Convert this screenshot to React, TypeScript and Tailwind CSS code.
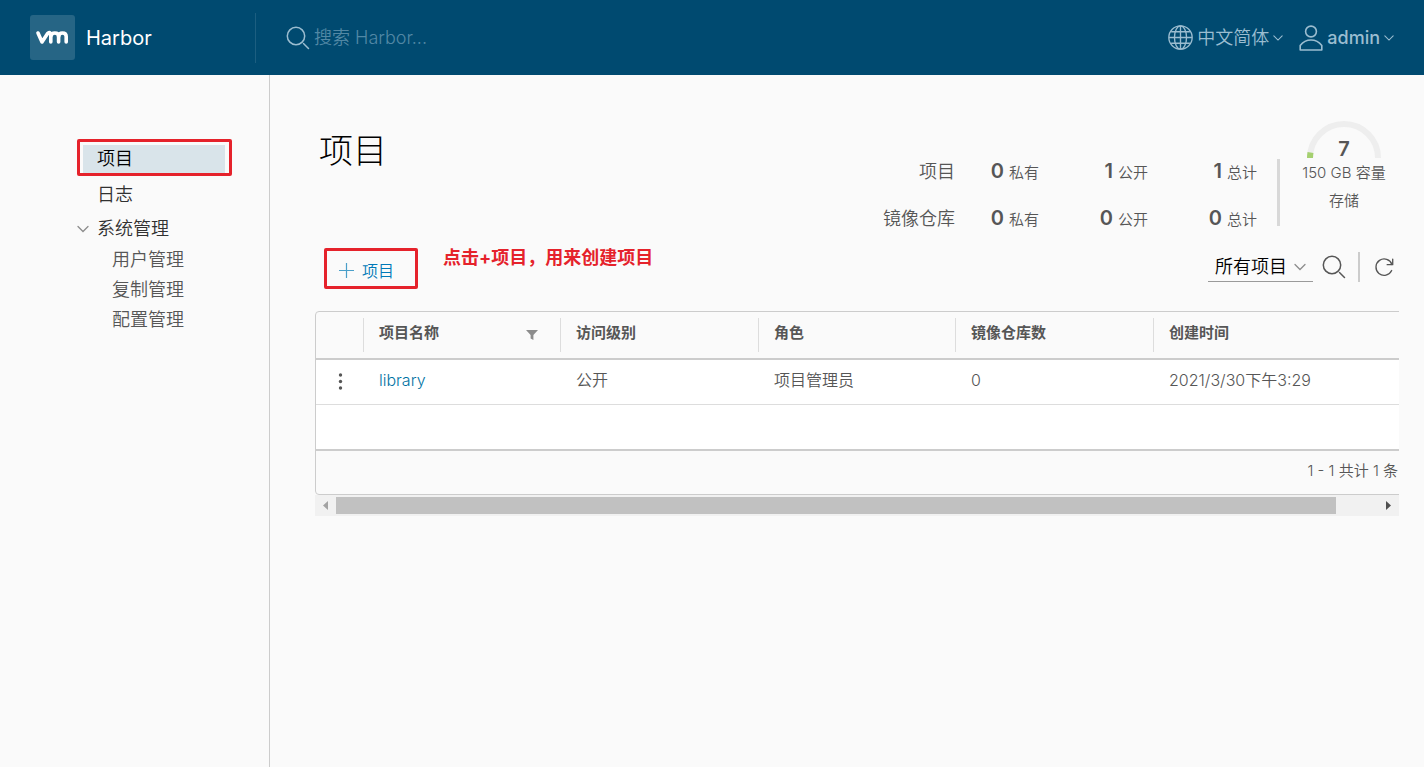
import React, { useState } from 'react';

const ChevronDown = ({ className }: { className?: string }) => (
  <svg viewBox="0 0 12 12" className={className} fill="none" stroke="currentColor" strokeWidth="1.3" strokeLinecap="round">
    <path d="M1 3.5 L6 8.5 L11 3.5" />
  </svg>
);

const SearchIcon = ({ className }: { className?: string }) => (
  <svg viewBox="0 0 24 24" className={className} fill="none" stroke="currentColor" strokeWidth="1.5" strokeLinecap="round">
    <circle cx="10" cy="10" r="8.7" />
    <path d="M17.5 17.5 L22.5 22.5" />
  </svg>
);

const GlobeIcon = ({ className }: { className?: string }) => (
  <svg viewBox="0 0 24 24" className={className} fill="none" stroke="currentColor" strokeWidth="1.3">
    <circle cx="12" cy="12" r="11.2" />
    <ellipse cx="12" cy="12" rx="5.8" ry="11.2" />
    <path d="M12 1 V23 M1 12 H23 M3 6.5 H21 M3 17.5 H21" />
  </svg>
);

const UserIcon = ({ className }: { className?: string }) => (
  <svg viewBox="0 0 24 26" className={className} fill="none" stroke="currentColor" strokeWidth="1.6" strokeLinejoin="round">
    <circle cx="12" cy="6.5" r="5.4" />
    <path d="M1.2 25 V20.5 C4 16.8 7.6 15 12 15 C16.4 15 20 16.8 22.8 20.5 V25 Z" />
  </svg>
);

const RefreshIcon = ({ className }: { className?: string }) => (
  <svg viewBox="0 0 22 22" className={className} fill="none" stroke="currentColor" strokeWidth="1.4" strokeLinecap="round" strokeLinejoin="round">
    <path d="M18.5 14.2 A8.6 8.6 0 1 1 18.8 7.8" />
    <path d="M19.6 2.2 V8 H13.8" />
  </svg>
);

const VmLogo = ({ className }: { className?: string }) => (
  <svg viewBox="0 0 45 45" className={className} fill="none" stroke="#fff" strokeWidth="3.6" strokeLinecap="round" strokeLinejoin="round">
    <rect width="45" height="45" rx="3" fill="#fff" fillOpacity="0.15" stroke="none" />
    <path d="M8 18 L12 27 L17.6 18.5 Q20.6 16.4 20.8 19.5 V27" />
    <path d="M20.8 21 Q21.5 18 24.8 18 Q28.6 18 28.6 21.5 V27" />
    <path d="M28.6 21.5 Q29 18 32.4 18 Q36.2 18 36.2 21.5 V27" />
  </svg>
);

const subLinks = ['用户管理', '复制管理', '配置管理'];

const stats = [
  { label: '项目', values: [0, 1, 1] },
  { label: '镜像仓库', values: [0, 0, 0] },
];
const statNames = ['私有', '公开', '总计'];

const columns = [
  { name: '项目名称', width: 'w-[197px]', filter: true },
  { name: '访问级别', width: 'w-[198px]' },
  { name: '角色', width: 'w-[197px]' },
  { name: '镜像仓库数', width: 'w-[198px]' },
  { name: '创建时间', width: '' },
];

const Header = () => {
  const [search, setSearch] = useState('');

  return (
    <header className="flex h-[75px] items-center bg-[#004a70] px-[30px] text-[#9bbdd0]">
      <a href="#" className="flex w-[225px] items-center gap-[11px] text-xl text-white">
        <VmLogo className="h-[45px] w-[45px]" />
        Harbor
      </a>
      <div className="flex h-[50px] flex-grow items-center gap-1 border-l border-[#1c5e80] pl-[30px]">
        <SearchIcon className="h-6 w-6" />
        <input
          type="text"
          aria-label="搜索"
          value={search}
          onChange={(e) => setSearch(e.target.value)}
          placeholder="搜索 Harbor..."
          className="w-[300px] bg-transparent text-lg font-[350] text-white outline-none placeholder:text-[#5288a5]"
        />
      </div>
      <div className="flex items-center gap-4 text-lg">
        <button className="flex items-center gap-1 font-[350]">
          <GlobeIcon className="h-[25px] w-[25px]" />
          中文简体
          <ChevronDown className="h-[10px] w-[10px]" />
        </button>
        <button className="flex items-center gap-1 font-medium">
          <UserIcon className="h-[26px] w-6" />
          admin
          <ChevronDown className="h-[10px] w-[10px]" />
        </button>
      </div>
    </header>
  );
};

const Sidebar = () => (
  <nav className="w-[270px] flex-shrink-0 border-r border-[#ccc] pt-16 pl-[77px] text-lg font-[350] text-[#313131]">
    <div className="h-[37px] w-[155px] rounded-xs border-3 border-[#e5222b] pt-[3px] pl-[3px]">
      <a href="#" className="flex h-7 w-[142px] items-center bg-[#d9e4ea] pl-[14px] text-black">项目</a>
    </div>
    <a href="#" className="flex h-[37px] items-center pl-5">日志</a>
    <button className="flex h-8 items-center gap-2">
      <ChevronDown className="h-3 w-3 text-[#8c8c8c]" />
      系统管理
    </button>
    {subLinks.map((link) => (
      <a key={link} href="#" className="flex h-[30px] items-center pl-[35px] text-[#565656]">{link}</a>
    ))}
  </nav>
);

const Statistics = () => (
  <div className="flex">
    <table className="mt-7 h-fit text-right text-[15px] font-[350]">
      <tbody>
        {stats.map((row) => (
          <tr key={row.label} className="h-[47px]">
            <th scope="row" className="text-lg font-[350]">{row.label}</th>
            {row.values.map((value, i) => (
              <td key={statNames[i]} className={i === 0 ? 'w-[84px]' : 'w-[109px]'}>
                <span className="mr-[5px] text-xl leading-6 font-semibold">{value}</span>
                {statNames[i]}
              </td>
            ))}
          </tr>
        ))}
      </tbody>
    </table>
    <div className="mt-[39px] ml-5 h-[67px] w-[3px] bg-[#d8d8d8]" />
    <div className="ml-5 flex w-[88px] flex-col items-center text-[15px] leading-7 font-[350]">
      <div className="relative h-[39px] w-[76px]">
        <svg viewBox="0 0 76 39" className="h-full w-full" fill="none" strokeWidth="6">
          <path d="M4 38 A34 34 0 0 1 72 38" stroke="#eee" />
          <path d="M4 38 A34 34 0 0 1 4.5 32.5" stroke="#a5d070" />
        </svg>
        <span className="absolute inset-x-0 bottom-0 text-center text-xl leading-5 font-semibold">7</span>
      </div>
      <span className="whitespace-nowrap">150 GB 容量</span>
      <span>存储</span>
    </div>
  </div>
);

const Toolbar = () => (
  <div className="mt-[6px] flex h-[51px] items-start justify-between">
    <div className="flex pl-[9px]">
      <button className="flex h-[41px] w-[94px] items-center gap-2 rounded-xs border-3 border-[#e5222b] pt-1 pl-3 text-base font-[350] text-[#0079b8]">
        <svg viewBox="0 0 15 15" className="h-[15px] w-[15px]" stroke="#4a9fc9" strokeWidth="1.2">
          <path d="M7.5 0 V15 M0 7.5 H15" />
        </svg>
        项目
      </button>
      <p className="ml-[25px] text-lg leading-5 font-bold text-[#e5222b]">点击+项目，用来创建项目</p>
    </div>
    <div className="mt-1 flex items-center pr-1">
      <div className="flex w-[105px] items-center border-b border-[#9a9a9a]">
        <select aria-label="项目筛选" className="w-[86px] appearance-none bg-transparent pl-[7px] text-lg leading-7 font-[350] text-black outline-none">
          <option>所有项目</option>
        </select>
        <ChevronDown className="h-3 w-3 text-[#8c8c8c]" />
      </div>
      <button aria-label="搜索" className="ml-[9px]">
        <SearchIcon className="h-6 w-6" />
      </button>
      <div className="mr-[14px] ml-3 h-[30px] w-[2px] bg-[#ccc]" />
      <button aria-label="刷新">
        <RefreshIcon className="h-[21px] w-[21px]" />
      </button>
    </div>
  </div>
);

const Datagrid = () => (
  <div className="mt-3">
    <div className="overflow-hidden">
      <div className="min-w-[1132px] rounded-sm border border-[#ccc] bg-[#fafafa]">
        <table className="w-full table-fixed border-collapse text-left">
          <thead>
            <tr className="h-[47px] border-b-2 border-[#ccc] text-[15px]">
              <th className="w-[47px]" aria-label="操作" />
              {columns.map((column) => (
                <th key={column.name} className={`p-0 font-semibold ${column.width}`}>
                  <div className="flex h-[34px] items-center justify-between border-l border-[#ddd] pr-[22px] pb-1 pl-[15px]">
                    {column.name}
                    {column.filter && (
                      <button aria-label="筛选项目名称" className="pt-1">
                        <svg viewBox="0 0 12 10" className="h-[10px] w-3" fill="#8c8c8c">
                          <path d="M0 0 H12 L7.4 5 V10 L4.6 8.6 V5 Z" />
                        </svg>
                      </button>
                    )}
                  </div>
                </th>
              ))}
            </tr>
          </thead>
          <tbody className="border-b-2 border-[#ccc] bg-white text-base font-[350]">
            <tr className="h-[45px] border-b border-[#ddd]">
              <td>
                <button aria-label="更多操作" className="ml-[22px] block">
                  <svg viewBox="0 0 5 17" className="h-[17px] w-[5px]" fill="#565656">
                    <circle cx="2.5" cy="2" r="1.7" />
                    <circle cx="2.5" cy="8.5" r="1.7" />
                    <circle cx="2.5" cy="15" r="1.7" />
                  </svg>
                </button>
              </td>
              <td className="pb-1 pl-4"><a href="#" className="text-[#0072a3]">library</a></td>
              <td className="pb-1 pl-4">公开</td>
              <td className="pb-1 pl-4">项目管理员</td>
              <td className="pb-1 pl-4">0</td>
              <td className="pb-1 pl-4">2021/3/30下午3:29</td>
            </tr>
            <tr className="h-[46px]">
              <td colSpan={6} />
            </tr>
          </tbody>
        </table>
        <div className="flex h-[43px] items-center justify-end pr-12 pb-[2px] text-[15px] font-[350]">1 - 1 共计 1 条</div>
      </div>
    </div>
    <div className="flex h-[21px] items-center bg-[#f1f1f1]">
      <button aria-label="向左滚动" className="flex w-[21px] justify-center">
        <svg viewBox="0 0 5 9" className="h-[9px] w-[5px]" fill="#a3a3a3"><path d="M5 0 V9 L0 4.5 Z" /></svg>
      </button>
      <div className="h-[17px] flex-grow">
        <div className="h-full w-[96%] bg-[#c1c1c1]" />
      </div>
      <button aria-label="向右滚动" className="flex w-[21px] justify-center">
        <svg viewBox="0 0 5 9" className="h-[9px] w-[5px]" fill="#505050"><path d="M0 0 V9 L5 4.5 Z" /></svg>
      </button>
    </div>
  </div>
);

export default function App() {
  return (
    <div className="flex min-h-screen flex-col bg-[#fafafa] font-['Inter','Noto_Sans_CJK_SC',sans-serif] text-[#565656]">
      <Header />
      <div className="flex flex-grow">
        <Sidebar />
        <main className="min-w-0 flex-grow pt-[45px] pr-[25px] pl-[45px]">
          <div className="flex justify-between pr-[11px]">
            <h1 className="pt-2 pl-1 text-[34px] leading-[46px] font-light text-black">项目</h1>
            <Statistics />
          </div>
          <Toolbar />
          <Datagrid />
        </main>
      </div>
    </div>
  );
}
